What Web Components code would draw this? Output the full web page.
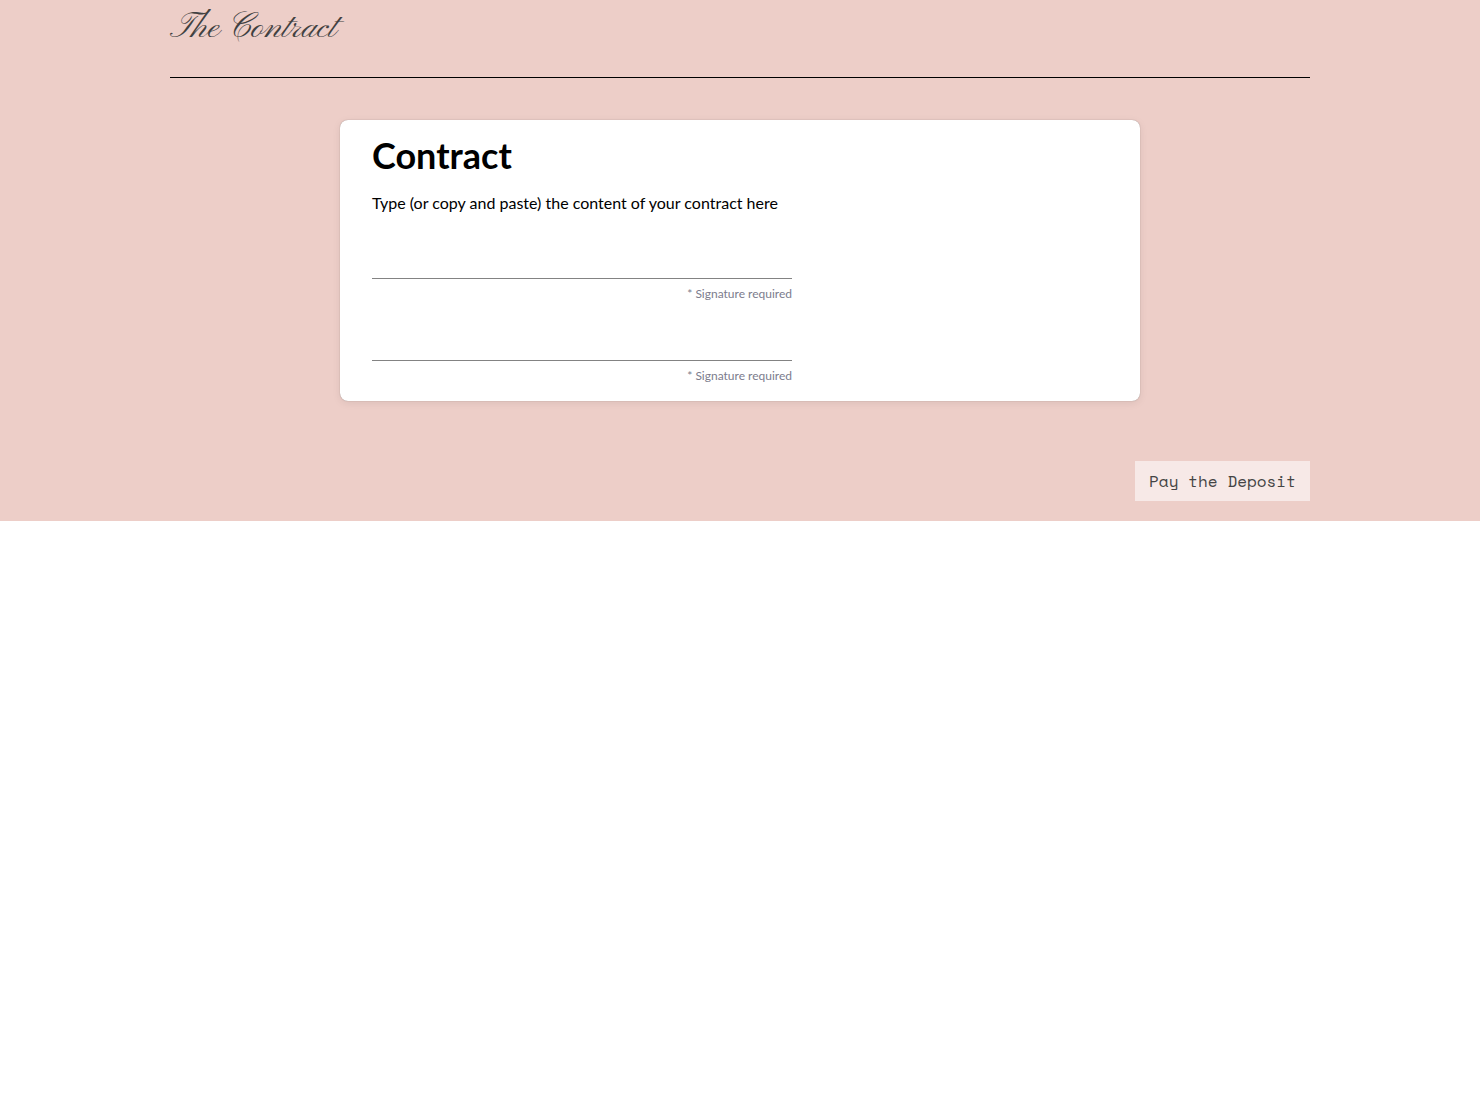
<!DOCTYPE html>
<html lang="en">
<head>
<meta charset="utf-8">
<meta name="viewport" content="width=device-width, initial-scale=1">
<title>The Contract</title>
<style>
  body {
    margin: 0;
    background: #ffffff;
    font-family: proxima-nova, "Proxima Nova", Lato, "Open Sans", sans-serif;
  }
</style>
</head>
<body>
<contract-page>
  <span slot="title">The Contract</span>
  <contract-card>
    <span slot="heading">Contract</span>
    <span slot="content">Type (or copy and paste) the content of your contract here</span>
    <signature-field>* Signature required</signature-field>
    <signature-field>* Signature required</signature-field>
  </contract-card>
  <action-button slot="actions">Pay the Deposit</action-button>
</contract-page>

<template id="page-template">
  <style>
    :host {
      display: block;
      background: #edcec8;
    }

    .container {
      box-sizing: border-box;
      max-width: 1180px;
      margin: 0 auto;
      padding: 0 20px 20px;
    }

    header {
      padding: 5px 0 24px;
      border-bottom: 1px solid #000000;
    }

    h1 {
      margin: 0;
      color: #414141;
      font: 400 36px/48px "Pinyon Script", "Liberation Serif", serif;
    }

    main {
      padding: 42px 0 60px;
    }

    footer {
      display: flex;
      justify-content: flex-end;
    }
  </style>
  <div class="container">
    <header><h1><slot name="title"></slot></h1></header>
    <main><slot></slot></main>
    <footer><slot name="actions"></slot></footer>
  </div>
</template>

<template id="card-template">
  <style>
    :host {
      display: block;
      box-sizing: border-box;
      max-width: 800px;
      margin: 0 auto;
      padding: 11px 32px 17px;
      border-radius: 8px;
      background: #ffffff;
      color: #000000;
      box-shadow: 0 0 1px rgba(0, 0, 0, 0.4), 0 2px 8px rgba(0, 0, 0, 0.08);
    }

    h2 {
      margin: 0;
      font-size: 36px;
      font-weight: 700;
      line-height: 48px;
    }

    p {
      margin: 12px 0 0;
      font-size: 16px;
      line-height: 24px;
    }

    .signatures {
      display: flex;
      flex-direction: column;
      gap: 16px;
      margin-top: 21px;
    }
  </style>
  <section>
    <h2><slot name="heading"></slot></h2>
    <p><slot name="content"></slot></p>
    <div class="signatures"><slot></slot></div>
  </section>
</template>

<template id="signature-template">
  <style>
    :host {
      display: flex;
      flex-direction: column;
      max-width: 420px;
    }

    input {
      box-sizing: border-box;
      width: 100%;
      height: 43px;
      margin: 0;
      padding: 0 8px;
      border: 0;
      border-bottom: 1px solid #838383;
      border-radius: 0;
      background: transparent;
      font: 24px "Pinyon Script", "Liberation Serif", serif;
    }

    label {
      padding-top: 7px;
      color: #7c7c8d;
      font-size: 12px;
      line-height: 16px;
      text-align: right;
    }
  </style>
  <input id="signature" type="text" required>
  <label for="signature"><slot></slot></label>
</template>

<template id="button-template">
  <style>
    :host {
      display: block;
    }

    button {
      min-width: 175px;
      padding: 8px 14px;
      border: 0;
      background: #f7e9e7;
      color: #444444;
      font: 16px/24px "Space Mono", "Liberation Mono", monospace;
      cursor: pointer;
    }

    button:hover {
      background: #ffffff;
    }
  </style>
  <button type="button"><slot></slot></button>
</template>

<script>
  class TemplateElement extends HTMLElement {
    constructor() {
      super();
      const template = document.getElementById(this.constructor.templateId);
      this.attachShadow({ mode: "open" });
      this.shadowRoot.append(template.content.cloneNode(true));
    }
  }

  class ContractPage extends TemplateElement {
    static templateId = "page-template";
  }

  class ContractCard extends TemplateElement {
    static templateId = "card-template";
  }

  class SignatureField extends TemplateElement {
    static templateId = "signature-template";
  }

  class ActionButton extends TemplateElement {
    static templateId = "button-template";
  }

  customElements.define("contract-page", ContractPage);
  customElements.define("contract-card", ContractCard);
  customElements.define("signature-field", SignatureField);
  customElements.define("action-button", ActionButton);
</script>
</body>
</html>
